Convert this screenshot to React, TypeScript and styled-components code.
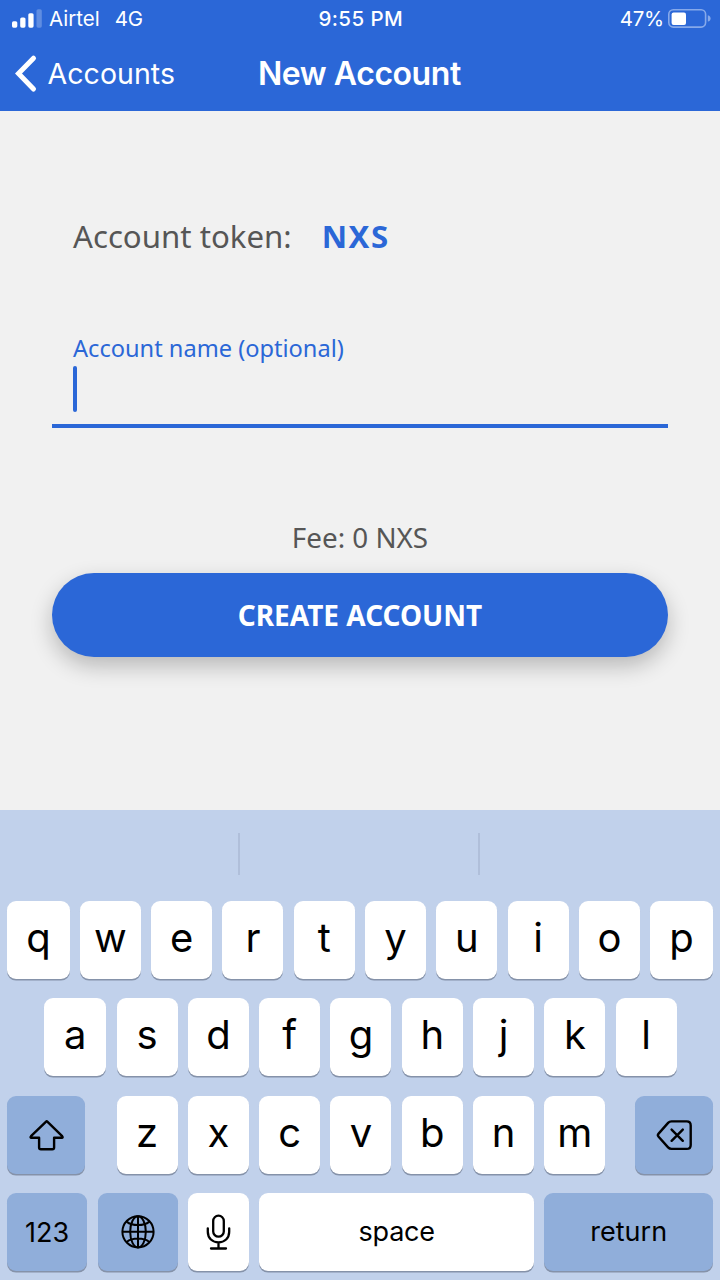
import React from 'react';
import styled, { createGlobalStyle } from 'styled-components';

const BLUE = '#2b67d7';
const UI_FONT = 'Inter, "Liberation Sans", sans-serif';
const BODY_FONT = '"Noto Sans", "Open Sans", sans-serif';

const GlobalStyle = createGlobalStyle`
  *, *::before, *::after { box-sizing: border-box; }
  body { margin: 0; background: #f1f1f1; }
`;

const Screen = styled.div`
  width: 720px;
  height: 1280px;
  display: flex;
  flex-direction: column;
  overflow: hidden;
  background: #f1f1f1;
  font-family: ${UI_FONT};
`;

const TopBar = styled.header`
  height: 111px;
  background: ${BLUE};
  color: #fff;
`;

const StatusBar = styled.div`
  height: 36px;
  padding: 0 9px 0 10.5px;
  display: grid;
  grid-template-columns: 1fr auto 1fr;
  align-items: center;
  font-size: 20.5px;
  line-height: 36px;
`;

const Carrier = styled.div`
  display: flex;
  align-items: center;
`;

const CarrierText = styled.span<{ $gap: number; $spacing: number }>`
  padding-top: 1px;
  margin-left: ${(p) => p.$gap}px;
  letter-spacing: ${(p) => p.$spacing}px;
`;

const Clock = styled.div`
  padding-top: 1px;
  font-weight: 500;
  letter-spacing: 0.4px;
`;

const Battery = styled.div`
  display: flex;
  align-items: center;
  justify-content: flex-end;
  gap: 4px;
`;

const BatteryLevel = styled.span`
  padding-top: 1px;
  letter-spacing: -0.2px;
`;

const NavBar = styled.div`
  height: 75px;
  padding-left: 13.5px;
  display: grid;
  grid-template-columns: 244.5px 202px 1fr;
  align-items: center;
  line-height: 75px;
`;

const BackLink = styled.div`
  display: flex;
  align-items: center;
  gap: 11px;
  font-size: 28.5px;
  letter-spacing: 0.05px;
`;

const Title = styled.h1`
  margin: 0;
  font-size: 32px;
  line-height: 75px;
  font-weight: 600;
  letter-spacing: -0.45px;
  white-space: nowrap;
`;

const Content = styled.main`
  height: 699px;
  padding: 101px 52px 0;
  font-family: ${BODY_FONT};
  color: #565656;
`;

const TokenRow = styled.div`
  height: 48px;
  padding-left: 21px;
  display: flex;
  gap: 30px;
  font-size: 31.2px;
  line-height: 48px;
`;

const TokenName = styled.strong`
  color: ${BLUE};
  font-weight: 700;
  letter-spacing: 1.6px;
`;

const Field = styled.div`
  height: 98px;
  margin-top: 70px;
  padding-left: 21px;
  border-bottom: 4px solid ${BLUE};
  color: ${BLUE};
`;

const FieldLabel = styled.div`
  height: 36px;
  font-size: 23.6px;
  line-height: 36px;
`;

const Caret = styled.div`
  width: 4px;
  height: 46px;
  border-radius: 2px;
  background: ${BLUE};
`;

const Fee = styled.div`
  height: 40px;
  margin-top: 89px;
  font-size: 27.8px;
  line-height: 40px;
  text-align: center;
`;

const CreateButton = styled.button`
  display: block;
  width: 616px;
  height: 84px;
  margin-top: 16px;
  padding: 0;
  border: 0;
  border-radius: 42px;
  background: ${BLUE};
  box-shadow: 0 9px 22px rgba(0, 0, 0, 0.24);
  color: #fff;
  font: 700 28px/83px ${BODY_FONT};
`;

const Keyboard = styled.section`
  height: 470px;
  background: #c1d1eb;
  color: #000;
`;

const Suggestions = styled.div`
  height: 91px;
  padding-top: 23px;
  display: grid;
  grid-template-columns: 240px 240px 240px;
`;

const Suggestion = styled.div<{ $divider?: boolean }>`
  height: 42px;
  border-right: ${(p) => (p.$divider ? '2px solid #b0bfda' : 'none')};
`;

const Keys = styled.div`
  display: flex;
  flex-direction: column;
  gap: 19.3px;
`;

const KeyRow = styled.div<{ $inset: number }>`
  display: flex;
  gap: 10.3px;
  padding-left: ${(p) => p.$inset}px;
`;

const Key = styled.div<{ $width?: number; $tone?: 'light' | 'dark'; $before?: number }>`
  flex: none;
  width: ${(p) => p.$width ?? 61}px;
  height: 78px;
  margin-left: ${(p) => p.$before ?? 0}px;
  display: flex;
  align-items: center;
  justify-content: center;
  border-radius: 9px;
  background: ${(p) => (p.$tone === 'dark' ? '#90aeda' : '#fff')};
  box-shadow: 0 1.6px 0 #8592a9;
`;

const Letter = styled.span`
  padding-bottom: 4px;
  font-size: 40px;
  line-height: 60px;
`;

const KeyLabel = styled.span<{ $drop?: number; $spacing?: number }>`
  padding-top: ${(p) => p.$drop ?? 0}px;
  font-size: 27px;
  line-height: 40px;
  letter-spacing: ${(p) => p.$spacing ?? 0}px;
`;

const Icon = styled.svg`
  display: block;
  flex: none;
  overflow: visible;
`;

const SignalIcon = () => (
  <Icon width="31" height="20" viewBox="0 0 31 20" fill="#fff">
    <rect x="1" y="12.2" width="5.3" height="6.5" rx="1.6" />
    <rect x="9.2" y="8.4" width="5.3" height="10.3" rx="1.6" />
    <rect x="17.3" y="4.2" width="5.3" height="14.5" rx="1.6" />
    <rect x="25.5" y="0.2" width="5.3" height="18.5" rx="1.6" opacity="0.25" />
  </Icon>
);

const BatteryIcon = () => (
  <Icon width="43" height="20" viewBox="0 0 43 20">
    <rect x="0.8" y="0.7" width="36.8" height="17.4" rx="4.5" fill="none" stroke="#86a9ea" strokeWidth="1.6" />
    <rect x="3.6" y="3.5" width="14.4" height="12.5" rx="2" fill="#fff" />
    <path d="M39.8 6.2c2 .6 2.8 1.7 2.8 3.2s-.8 2.6-2.8 3.2z" fill="#86a9ea" />
  </Icon>
);

const ChevronIcon = () => (
  <Icon width="23" height="38" viewBox="0 0 23 38" fill="none" stroke="#fff" strokeWidth="5" strokeLinecap="round" strokeLinejoin="miter">
    <path d="M19.5 3.2 4.5 18.6l15 15.4" />
  </Icon>
);

const ShiftIcon = () => (
  <Icon width="34" height="32" viewBox="1 0 34 32" fill="none" stroke="#000" strokeWidth="2.4" strokeLinejoin="round">
    <path d="M18.1 2.7 3 17.2c-.8.9-.5 1.5.4 1.5h7.7v9.7c0 1.2.6 1.800 1.800 1.800h11.400c1.200 0 1.800-.6 1.800-1.800v-9.700h7.700c.9 0 1.200-.6.4-1.500L19.300 2.700c-.4-.4-.8-.4-1.200 0z" />
  </Icon>
);

const DeleteIcon = () => (
  <Icon width="36" height="32" viewBox="0 0 36 32" fill="none" stroke="#000" strokeWidth="2.4" strokeLinecap="round" strokeLinejoin="round">
    <path d="M15.5 2.4h15.200c2.600 0 4 1.400 4 4v19.500c0 2.600-1.400 4-4 4H15.500c-1.500 0-2.400-.4-3.400-1.500L2.600 17.800c-1-1.100-1-2.100 0-3.200l9.500-10.700c1-1.100 1.900-1.500 3.400-1.500z" />
    <path d="m15.600 10.600 11.200 11.200M26.800 10.600 15.600 21.800" />
  </Icon>
);

const GlobeIcon = () => (
  <Icon width="34" height="34" viewBox="0 0 34 34" fill="none" stroke="#000" strokeWidth="2">
    <circle cx="17" cy="16.8" r="15.6" />
    <ellipse cx="17" cy="16.8" rx="7.8" ry="15.6" />
    <path d="M17 1.200v31.200M1.400 16.800h31.200M5.600 6.600c3 2.400 7 3.500 11.400 3.500s8.400-1.100 11.400-3.500M5.600 27c3-2.400 7-3.500 11.400-3.500s8.400 1.100 11.400 3.500" />
  </Icon>
);

const MicIcon = () => (
  <Icon width="24" height="36" viewBox="-0.5 -0.5 24 36" fill="none" stroke="#000" strokeWidth="2.3" strokeLinecap="round">
    <rect x="6.7" y="1.2" width="10.6" height="21" rx="5.3" />
    <path d="M1.300 13.800v3.500C1.300 23.800 6 27.800 12 27.800s10.700-4 10.700-10.500v-3.500M12 27.800V34M4.500 34h15" />
  </Icon>
);

const LetterKey = ({ char, width, before }: { char: string; width?: number; before?: number }) => (
  <Key $width={width} $before={before}>
    <Letter>{char}</Letter>
  </Key>
);

export default function App() {
  return (
    <>
      <GlobalStyle />
      <Screen>
        <TopBar>
          <StatusBar>
            <Carrier>
              <SignalIcon />
              <CarrierText $gap={7.5} $spacing={0}>Airtel</CarrierText>
              <CarrierText $gap={15} $spacing={-0.2}>4G</CarrierText>
            </Carrier>
            <Clock>9:55 PM</Clock>
            <Battery>
              <BatteryLevel>47%</BatteryLevel>
              <BatteryIcon />
            </Battery>
          </StatusBar>
          <NavBar>
            <BackLink>
              <ChevronIcon />
              Accounts
            </BackLink>
            <Title>New Account</Title>
          </NavBar>
        </TopBar>
        <Content>
          <TokenRow>
            <span>Account token:</span>
            <TokenName>NXS</TokenName>
          </TokenRow>
          <Field>
            <FieldLabel>Account name (optional)</FieldLabel>
            <Caret />
          </Field>
          <Fee>Fee: 0 NXS</Fee>
          <CreateButton>CREATE ACCOUNT</CreateButton>
        </Content>
        <Keyboard>
          <Suggestions>
            <Suggestion $divider />
            <Suggestion $divider />
            <Suggestion />
          </Suggestions>
          <Keys>
            <KeyRow $inset={7.3}>
              {'qwertyuiop'.split('').map((c) => (
                <LetterKey key={c} char={c} width={c === 'q' || c === 'p' ? 62.3 : 61} />
              ))}
            </KeyRow>
            <KeyRow $inset={44}>
              {'asdfghjkl'.split('').map((c) => (
                <LetterKey key={c} char={c} width={c === 'a' ? 62.3 : 61} />
              ))}
            </KeyRow>
            <KeyRow $inset={7.3}>
              <Key $width={78} $tone="dark">
                <ShiftIcon />
              </Key>
              {'zxcvbnm'.split('').map((c) => (
                <LetterKey key={c} char={c} before={c === 'z' ? 21 : 0} />
              ))}
              <Key $width={78} $tone="dark" $before={19.5}>
                <DeleteIcon />
              </Key>
            </KeyRow>
            <KeyRow $inset={7.3}>
              <Key $width={79.7} $tone="dark">
                <KeyLabel $drop={2}>123</KeyLabel>
              </Key>
              <Key $width={80.3} $tone="dark" $before={0.7}>
                <GlobeIcon />
              </Key>
              <Key $before={-0.7}>
                <MicIcon />
              </Key>
              <Key $width={275}>
                <KeyLabel $spacing={-0.2}>space</KeyLabel>
              </Key>
              <Key $width={168.5} $tone="dark">
                <KeyLabel>return</KeyLabel>
              </Key>
            </KeyRow>
          </Keys>
        </Keyboard>
      </Screen>
    </>
  );
}
